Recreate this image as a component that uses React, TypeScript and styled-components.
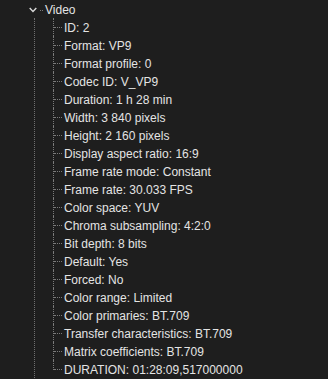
import React from 'react';
import styled, { createGlobalStyle } from 'styled-components';

const GlobalStyle = createGlobalStyle`
  html, body {
    margin: 0;
    padding: 0;
    background-color: #1e1e1e;
  }
  body {
    font-family: 'Liberation Sans', Arial, sans-serif;
    font-size: 12px;
    color: #e4e4e4;
    overflow: hidden;
  }
`;

const Tree = styled.div`
  width: 328px;
  height: 379px;
  background-color: #1e1e1e;
  overflow: hidden;
`;

const NodeRow = styled.div`
  display: flex;
  align-items: center;
  height: 18px;
  padding-left: 28px;
`;

const Toggle = styled.span`
  display: flex;
  align-items: center;
  justify-content: center;
  width: 10px;
  height: 18px;
  padding-top: 2px;
  box-sizing: border-box;
`;

const Stub = styled.span`
  width: 3px;
  margin: 2px 2px 0 2px;
  border-top: 1px dotted #7a7a7a;
  height: 0;
`;

const Label = styled.span`
  white-space: nowrap;
  line-height: 18px;
  padding-top: 1px;
`;

/* dotted line for the siblings of "Video" that sit further down */
const Children = styled.div`
  margin-left: 34px;
  border-left: 1px dotted #6f6f6f;
  padding-left: 18px;
  min-height: 400px;
`;

const Leaf = styled.div`
  display: flex;
  align-items: center;
  height: 18px;
`;

const Connector = styled.span<{ $last?: boolean }>`
  position: relative;
  flex: 0 0 11px;
  height: 18px;

  &::before {
    content: '';
    position: absolute;
    left: 0;
    top: 0;
    height: ${(p) => (p.$last ? '10px' : '18px')};
    border-left: 1px dotted #7a7a7a;
  }

  &::after {
    content: '';
    position: absolute;
    left: 1px;
    top: 9px;
    width: 8px;
    border-top: 1px dotted #7a7a7a;
  }
`;

const fields: [string, string][] = [
  ['ID', '2'],
  ['Format', 'VP9'],
  ['Format profile', '0'],
  ['Codec ID', 'V_VP9'],
  ['Duration', '1 h 28 min'],
  ['Width', '3 840 pixels'],
  ['Height', '2 160 pixels'],
  ['Display aspect ratio', '16:9'],
  ['Frame rate mode', 'Constant'],
  ['Frame rate', '30.033 FPS'],
  ['Color space', 'YUV'],
  ['Chroma subsampling', '4:2:0'],
  ['Bit depth', '8 bits'],
  ['Default', 'Yes'],
  ['Forced', 'No'],
  ['Color range', 'Limited'],
  ['Color primaries', 'BT.709'],
  ['Transfer characteristics', 'BT.709'],
  ['Matrix coefficients', 'BT.709'],
  ['DURATION', '01:28:09,517000000'],
];

const Chevron = () => (
  <svg width="8" height="6" viewBox="0 0 8 6">
    <path d="M0.7 1 L4 4.4 L7.3 1" fill="none" stroke="#dadada" strokeWidth="1.4" />
  </svg>
);

export default function App() {
  return (
    <Tree>
      <GlobalStyle />
      <NodeRow>
        <Toggle>
          <Chevron />
        </Toggle>
        <Stub />
        <Label>Video</Label>
      </NodeRow>
      <Children>
        {fields.map(([k, v], i) => (
          <Leaf key={k}>
            <Connector $last={i === fields.length - 1} />
            <Label>
              {k}: {v}
            </Label>
          </Leaf>
        ))}
      </Children>
    </Tree>
  );
}
